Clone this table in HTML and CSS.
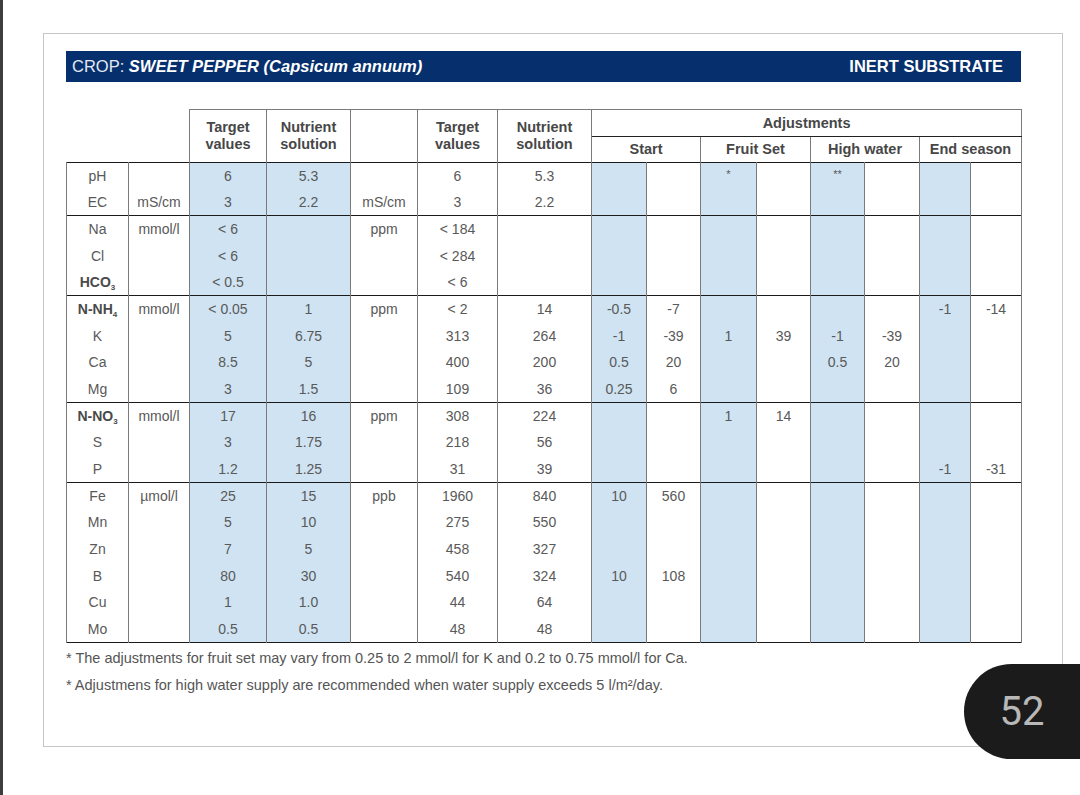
FILE: index.html
```html
<!DOCTYPE html>
<html>
<head>
<meta charset="utf-8">
<link rel="stylesheet" href="styles.css">
</head>
<body>
<div class="page">
  <div class="card">
    <div class="titlebar">
      <span class="crop">CROP: <b><i>SWEET PEPPER (Capsicum annuum)</i></b></span>
      <b class="substrate">INERT SUBSTRATE</b>
    </div>
    <table class="grid">
      <colgroup>
        <col class="w62"><col class="w61"><col class="w77 sh"><col class="w84 sh"><col class="w67"><col class="w80"><col class="w94">
        <col class="w55 sh"><col class="w54"><col class="w56 sh"><col class="w54"><col class="w54 sh"><col class="w55"><col class="w51 sh"><col class="w51">
      </colgroup>
      <thead>
        <tr class="h1">
          <th class="corner" colspan="2" rowspan="2"></th>
          <th rowspan="2">Target<br>values</th>
          <th rowspan="2">Nutrient<br>solution</th>
          <th rowspan="2"></th>
          <th rowspan="2">Target<br>values</th>
          <th rowspan="2">Nutrient<br>solution</th>
          <th class="adj" colspan="8">Adjustments</th>
        </tr>
        <tr class="h2">
          <th colspan="2">Start</th>
          <th colspan="2">Fruit Set</th>
          <th colspan="2">High water</th>
          <th colspan="2">End season</th>
        </tr>
      </thead>
      <tbody>
        <tr><td>pH</td><td></td><td>6</td><td>5.3</td><td></td><td>6</td><td>5.3</td><td></td><td></td><td class="star">*</td><td></td><td class="star">**</td><td></td><td></td><td></td></tr>
        <tr><td>EC</td><td>mS/cm</td><td>3</td><td>2.2</td><td>mS/cm</td><td>3</td><td>2.2</td><td></td><td></td><td></td><td></td><td></td><td></td><td></td><td></td></tr>
      </tbody>
      <tbody>
        <tr><td>Na</td><td>mmol/l</td><td>&lt; 6</td><td></td><td>ppm</td><td>&lt; 184</td><td></td><td></td><td></td><td></td><td></td><td></td><td></td><td></td><td></td></tr>
        <tr><td>Cl</td><td></td><td>&lt; 6</td><td></td><td></td><td>&lt; 284</td><td></td><td></td><td></td><td></td><td></td><td></td><td></td><td></td><td></td></tr>
        <tr><td class="b">HCO<sub>3</sub></td><td></td><td>&lt; 0.5</td><td></td><td></td><td>&lt; 6</td><td></td><td></td><td></td><td></td><td></td><td></td><td></td><td></td><td></td></tr>
      </tbody>
      <tbody>
        <tr><td class="b">N-NH<sub>4</sub></td><td>mmol/l</td><td>&lt; 0.05</td><td>1</td><td>ppm</td><td>&lt; 2</td><td>14</td><td>-0.5</td><td>-7</td><td></td><td></td><td></td><td></td><td>-1</td><td>-14</td></tr>
        <tr><td>K</td><td></td><td>5</td><td>6.75</td><td></td><td>313</td><td>264</td><td>-1</td><td>-39</td><td>1</td><td>39</td><td>-1</td><td>-39</td><td></td><td></td></tr>
        <tr><td>Ca</td><td></td><td>8.5</td><td>5</td><td></td><td>400</td><td>200</td><td>0.5</td><td>20</td><td></td><td></td><td>0.5</td><td>20</td><td></td><td></td></tr>
        <tr><td>Mg</td><td></td><td>3</td><td>1.5</td><td></td><td>109</td><td>36</td><td>0.25</td><td>6</td><td></td><td></td><td></td><td></td><td></td><td></td></tr>
      </tbody>
      <tbody>
        <tr><td class="b">N-NO<sub>3</sub></td><td>mmol/l</td><td>17</td><td>16</td><td>ppm</td><td>308</td><td>224</td><td></td><td></td><td>1</td><td>14</td><td></td><td></td><td></td><td></td></tr>
        <tr><td>S</td><td></td><td>3</td><td>1.75</td><td></td><td>218</td><td>56</td><td></td><td></td><td></td><td></td><td></td><td></td><td></td><td></td></tr>
        <tr><td>P</td><td></td><td>1.2</td><td>1.25</td><td></td><td>31</td><td>39</td><td></td><td></td><td></td><td></td><td></td><td></td><td>-1</td><td>-31</td></tr>
      </tbody>
      <tbody>
        <tr><td>Fe</td><td>µmol/l</td><td>25</td><td>15</td><td>ppb</td><td>1960</td><td>840</td><td>10</td><td>560</td><td></td><td></td><td></td><td></td><td></td><td></td></tr>
        <tr><td>Mn</td><td></td><td>5</td><td>10</td><td></td><td>275</td><td>550</td><td></td><td></td><td></td><td></td><td></td><td></td><td></td><td></td></tr>
        <tr><td>Zn</td><td></td><td>7</td><td>5</td><td></td><td>458</td><td>327</td><td></td><td></td><td></td><td></td><td></td><td></td><td></td><td></td></tr>
        <tr><td>B</td><td></td><td>80</td><td>30</td><td></td><td>540</td><td>324</td><td>10</td><td>108</td><td></td><td></td><td></td><td></td><td></td><td></td></tr>
        <tr><td>Cu</td><td></td><td>1</td><td>1.0</td><td></td><td>44</td><td>64</td><td></td><td></td><td></td><td></td><td></td><td></td><td></td><td></td></tr>
        <tr><td>Mo</td><td></td><td>0.5</td><td>0.5</td><td></td><td>48</td><td>48</td><td></td><td></td><td></td><td></td><td></td><td></td><td></td><td></td></tr>
      </tbody>
    </table>
    <p class="note note1">* The adjustments for fruit set may vary from 0.25 to 2 mmol/l for K and 0.2 to 0.75 mmol/l for Ca.</p>
    <p class="note note2">* Adjustmens for high water supply are recommended when water supply exceeds 5 l/m²/day.</p>
  </div>
  <div class="pagenum">52</div>
</div>
</body>
</html>
```

FILE: styles.css
```css
html, body {
  margin: 0;
  padding: 0;
  background: #ffffff;
}
.page {
  position: relative;
  width: 1080px;
  height: 795px;
  box-sizing: border-box;
  border-left: 3px solid #3d3d3d;
  overflow: hidden;
  font-family: "Liberation Sans", Arial, sans-serif;
}
.card {
  margin: 33px 0 0 40px;
  width: 1020px;
  height: 714px;
  box-sizing: border-box;
  border: 1px solid #c6c6c6;
  padding: 17px 41px 0 22px;
}
.titlebar {
  height: 31px;
  background: #06306d;
  color: #ffffff;
  display: flex;
  align-items: center;
  justify-content: space-between;
  padding: 0 18px 0 6px;
  font-size: 16.5px;
}
.crop { color: #e4eaf3; }
.crop b { color: #ffffff; }
.titlebar b { font-weight: bold; }

.grid {
  margin-top: 27px;
  border-collapse: collapse;
  table-layout: fixed;
  width: 955px;
  color: #595959;
  font-size: 14px;
}
.grid col.sh { background: #cfe3f2; }
.w62 { width: 62px; } .w61 { width: 61px; } .w77 { width: 77px; } .w84 { width: 84px; }
.w67 { width: 67px; } .w80 { width: 80px; } .w94 { width: 94px; } .w55 { width: 55px; }
.w54 { width: 54px; } .w56 { width: 56px; } .w51 { width: 51px; }

.grid th {
  background: #ffffff;
  color: #474747;
  font-weight: bold;
  font-size: 14.5px;
  line-height: 17px;
  padding: 0;
  border-top: 1px solid #7a7a7a;
  border-left: 1px solid #7a7a7a;
  border-right: 1px solid #7a7a7a;
  text-align: center;
  vertical-align: middle;
}
.grid th.corner {
  border: none;
}
.grid th.adj { border-bottom: 1px solid #222; }
.grid .h1 { height: 27px; }
.grid .h2 { height: 26px; }
.grid tbody { border-top: 1px solid #1a1a1a; }
.grid tbody:last-child { border-bottom: 1px solid #1a1a1a; }
.grid tbody tr { height: 26.67px; }
.grid td {
  padding: 0;
  text-align: center;
  vertical-align: middle;
  border-left: 1px solid #7a7a7a;
  border-right: 1px solid #7a7a7a;
  white-space: nowrap;
}
.grid td.b { font-weight: bold; color: #4a4a4a; }
.grid sub { font-size: 8px; vertical-align: -3px; line-height: 0; }
.grid td.star { font-size: 11px; vertical-align: top; padding-top: 5px; }

.note {
  margin: 0;
  color: #555555;
  font-size: 14.5px;
  line-height: 17px;
}
.note1 { margin-top: 7px; }
.note2 { margin-top: 10px; }

.pagenum {
  position: absolute;
  left: 961px;
  top: 664px;
  width: 116px;
  height: 95px;
  border-radius: 48px 0 0 48px;
  background: #1b1b1b;
  color: #b8b8b8;
  font-family: Roboto, "Liberation Sans", sans-serif;
  font-size: 40px;
  display: flex;
  align-items: center;
  justify-content: center;
}
```
